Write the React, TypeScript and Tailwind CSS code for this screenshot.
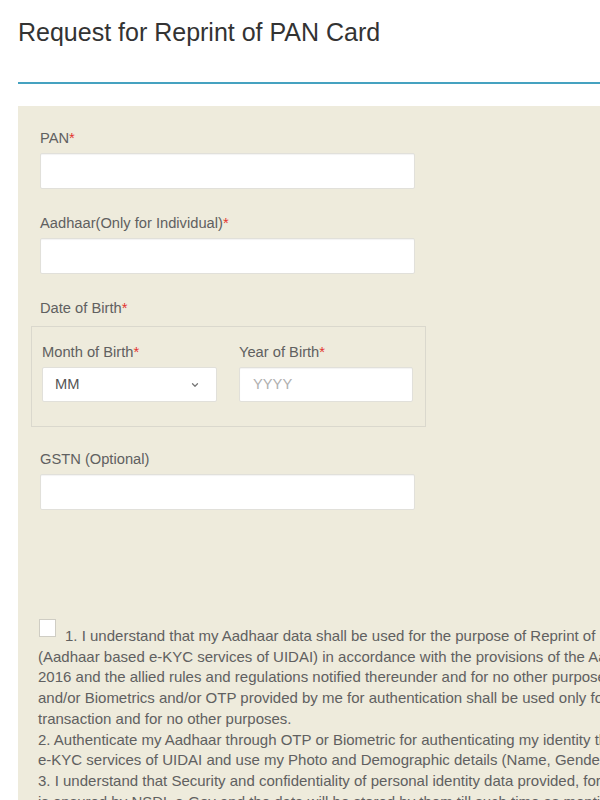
import { ChevronDown } from "lucide-react";

const consentLines = [
  "(Aadhaar based e-KYC services of UIDAI) in accordance with the provisions of the Aadhaar (Targeted Delivery of Financial and",
  "2016 and the allied rules and regulations notified thereunder and for no other purpose. I understand that my Aadhaar number",
  "and/or Biometrics and/or OTP provided by me for authentication shall be used only for authenticating my identity for this",
  "transaction and for no other purposes.",
  "2. Authenticate my Aadhaar through OTP or Biometric for authenticating my identity through the Aadhaar Authentication system",
  "e-KYC services of UIDAI and use my Photo and Demographic details (Name, Gender, Date of Birth and Address) for Reprint of PAN",
  "3. I understand that Security and confidentiality of personal identity data provided, for the purpose of Aadhaar based",
  "is ensured by NSDL e-Gov and the data will be stored by them till such time as mentioned in guidelines from UIDAI from time to time.",
];

function Label({ text, required }: { text: string; required?: boolean }) {
  return (
    <label className="block pt-[2px] text-[14.7px] leading-[21px] text-[#606060] whitespace-nowrap">
      {text}
      {required && <span className="text-[#e3342f]">*</span>}
    </label>
  );
}

function Field({ label, required, children }: { label: string; required?: boolean; children: React.ReactNode }) {
  return (
    <div className="flex flex-col gap-[4px]">
      <Label text={label} required={required} />
      {children}
    </div>
  );
}

function TextInput({ className, placeholder }: { className: string; placeholder?: string }) {
  return (
    <div
      className={`${className} bg-white border border-[#e1e0da] rounded-[2px] shadow-[inset_0_1px_1px_rgba(0,0,0,0.05)] flex items-center pl-[13px] text-[14.7px] text-[#b0b0b0]`}
    >
      {placeholder}
    </div>
  );
}

export default function App() {
  return (
    <div className="w-[600px] h-[800px] overflow-hidden bg-white flex flex-col [font-family:'Liberation_Sans',Arial,sans-serif]">
      <h1 className="pt-[17px] pl-[18px] text-[25px] leading-[30px] text-[#333] font-normal whitespace-nowrap">
        Request for Reprint of PAN Card
      </h1>

      <div className="ml-[18px] mt-[35px] w-[700px] h-[2px] shrink-0 bg-[#45a2c0]" />

      <section className="ml-[18px] mt-[22px] w-[700px] shrink-0 h-[800px] bg-[#eeebdc] pt-[20px] flex flex-col">
        <div className="pl-[22px] flex flex-col gap-[22px]">
          <Field label="PAN" required>
            <TextInput className="w-[375px] h-[36px]" />
          </Field>

          <Field label="Aadhaar(Only for Individual)" required>
            <TextInput className="w-[375px] h-[36px]" />
          </Field>

          <div className="flex flex-col gap-[7px]">
            <Label text="Date of Birth" required />
            <fieldset className="-ml-[9px] w-[395px] h-[101px] border border-[#dad8cd] pt-[13px] pl-[10px] flex gap-[22px]">
              <Field label="Month of Birth" required>
                <div className="w-[175px] h-[35px] bg-white border border-[#e1e0da] rounded-[2px] flex items-center justify-between pl-[12px] pr-[16px] text-[14.7px] text-[#555]">
                  MM
                  <ChevronDown size={10} strokeWidth={3} className="text-[#777]" />
                </div>
              </Field>
              <Field label="Year of Birth" required>
                <TextInput className="w-[174px] h-[35px]" placeholder="YYYY" />
              </Field>
            </fieldset>
          </div>

          <div className="-mt-[2px]">
            <Field label="GSTN (Optional)">
              <TextInput className="w-[375px] h-[36px]" />
            </Field>
          </div>
        </div>

        <div className="pl-[20px] mt-[116px] flex flex-col text-[15px] leading-[20.7px] text-[#606060] whitespace-nowrap">
          <div className="flex items-start">
            <span className="w-[17px] h-[18px] shrink-0 bg-white border border-[#cfcdc4] ml-[1px] mr-[9px] -mt-[7px]" />
            1. I understand that my Aadhaar data shall be used for the purpose of Reprint of PAN Card
          </div>
          {consentLines.map((line) => (
            <div key={line}>{line}</div>
          ))}
        </div>
      </section>
    </div>
  );
}
